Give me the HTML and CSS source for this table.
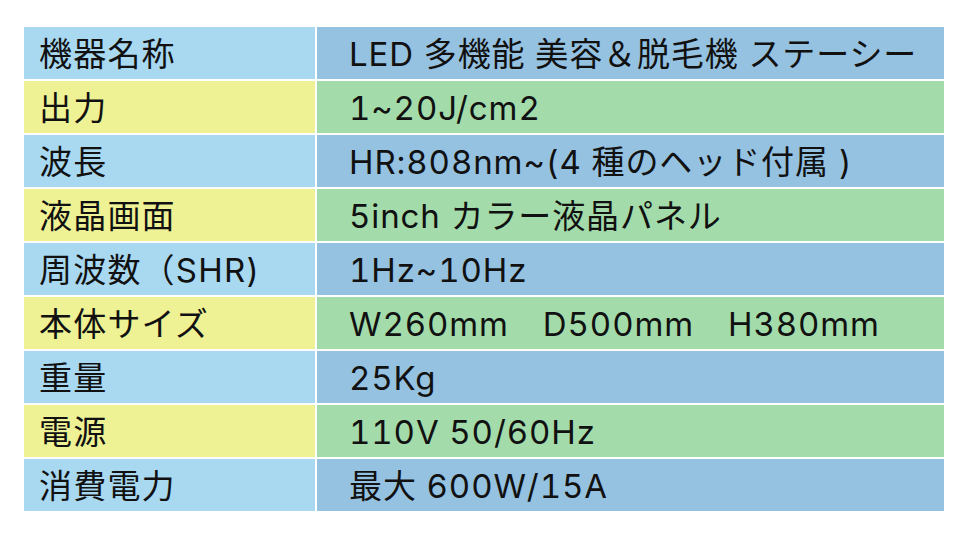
FILE: index.html
```html
<!DOCTYPE html>
<html lang="ja">
<head>
<meta charset="utf-8">
<link rel="stylesheet" href="styles.css">
</head>
<body>
<div class="spec">
  <div class="k b">機器名称</div><div class="v b">LED 多機能 美容＆脱毛機 ステーシー</div>
  <div class="k y">出力</div><div class="v g">1~20J/cm2</div>
  <div class="k b">波長</div><div class="v b">HR:808nm~(4 種のヘッド付属 )</div>
  <div class="k y">液晶画面</div><div class="v g">5inch カラー液晶パネル</div>
  <div class="k b">周波数（SHR)</div><div class="v b">1Hz~10Hz</div>
  <div class="k y">本体サイズ</div><div class="v g">W260mm　D500mm　H380mm</div>
  <div class="k b">重量</div><div class="v b">25Kg</div>
  <div class="k y">電源</div><div class="v g">110V 50/60Hz</div>
  <div class="k b">消費電力</div><div class="v b">最大 600W/15A</div>
</div>
</body>
</html>
```
FILE: styles.css
```css
html, body {
  margin: 0;
  background: #ffffff;
}
body {
  padding: 27px 16px 0 24px;
  font-family: "Inter", "Noto Sans CJK JP", "Noto Sans", sans-serif;
  color: #111111;
}
.spec {
  display: grid;
  grid-template-columns: 291px 627px;
  grid-auto-rows: 52px;
  column-gap: 2px;
  row-gap: 2px;
  width: 920px;
}
.k, .v {
  display: flex;
  align-items: center;
  box-sizing: border-box;
  padding-top: 3px;
  font-size: 33px;
  line-height: 1;
  white-space: nowrap;
  font-feature-settings: "tnum" 1;
}
.k { padding-left: 15px; letter-spacing: 1.2px; background: #a8d9f1; }
.k.y { background: #eef194; }
.v { padding-left: 32px; letter-spacing: 0.9px; }
.v.b { background: #95c2e1; }
.v.g { background: #a3dcaa; }
```
